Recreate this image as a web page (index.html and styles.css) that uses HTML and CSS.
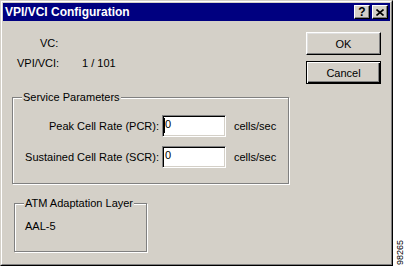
FILE: index.html
```html
<!DOCTYPE html>
<html lang="en">

<head>
    <meta charset="UTF-8">
    <title>VPI/VCI Configuration</title>
    <link rel="stylesheet" href="styles.css">
</head>

<body>
    <div class="dialog">
        <div class="frame">
            <div class="titlebar">
                <span class="title">VPI/VCI Configuration</span>
                <div class="caption-btns">
                    <span class="cbtn">?</span>
                    <span class="cbtn">
                        <svg width="8" height="7" viewBox="0 0 8 7">
                            <path d="M0.5 0.5 L7.5 6.5 M7.5 0.5 L0.5 6.5" stroke="#000" stroke-width="1.6" fill="none" />
                        </svg>
                    </span>
                </div>
            </div>
            <div class="content">
                <div class="main">
                    <div class="info-row vc"><span class="lbl">VC:</span></div>
                    <div class="info-row vpi"><span class="lbl">VPI/VCI:</span><span class="val">1 / 101</span></div>

                    <div class="group service">
                        <span class="group-label">Service Parameters</span>
                        <div class="field">
                            <span class="field-label">Peak Cell Rate (PCR):</span>
                            <span class="edit"><span class="caret"></span>0</span>
                            <span class="unit">cells/sec</span>
                        </div>
                        <div class="field">
                            <span class="field-label">Sustained Cell Rate (SCR):</span>
                            <span class="edit">0</span>
                            <span class="unit">cells/sec</span>
                        </div>
                    </div>

                    <div class="group aal">
                        <span class="group-label">ATM Adaptation Layer</span>
                        AAL-5
                    </div>
                </div>
                <div class="buttons">
                    <button class="btn">OK</button>
                    <button class="btn default">Cancel</button>
                </div>
            </div>
        </div>
    </div>
    <div class="side"><span class="figno">98265</span></div>
</body>

</html>
```

FILE: styles.css
```css
* {
    margin: 0;
    padding: 0;
    box-sizing: border-box;
}

body {
    display: flex;
    width: 406px;
    height: 267px;
    background: #fff;
    font-family: "Liberation Sans", Arial, sans-serif;
    font-size: 11px;
    color: #000;
}

.dialog {
    width: 393px;
    height: 266px;
    background: #d4d0c8;
    border: 1px solid;
    border-color: #d4d0c8 #000 #000 #d4d0c8;
}

.frame {
    height: 100%;
    border: 1px solid;
    border-color: #fff #808080 #808080 #fff;
    padding: 1px;
    display: flex;
    flex-direction: column;
}

/* title bar */
.titlebar {
    height: 18px;
    background: #000080;
    color: #fff;
    display: flex;
    align-items: center;
    padding: 0 2px;
}

.title {
    flex: 1;
    font-weight: bold;
    font-size: 12px;
}

.caption-btns {
    display: flex;
    gap: 2px;
}

.cbtn {
    width: 16px;
    height: 14px;
    background: #d4d0c8;
    border: 1px solid;
    border-color: #fff #000 #000 #fff;
    box-shadow: inset -1px -1px 0 #808080;
    display: flex;
    align-items: center;
    justify-content: center;
    color: #000;
    font-weight: bold;
    font-size: 12px;
}

/* body */
.content {
    flex: 1;
    display: flex;
}

.main {
    flex: 1;
}

.info-row {
    display: flex;
    line-height: 13px;
}

.vc {
    margin: 16px 0 0 37px;
}

.vpi {
    margin: 7px 0 0 14px;
}

.vpi .lbl {
    width: 65px;
}

/* group boxes */
.group {
    position: relative;
    border: 1px solid #808080;
    box-shadow: 1px 1px 0 #fff, inset 1px 1px 0 #fff;
}

.group-label {
    position: absolute;
    top: -7px;
    left: 9px;
    padding: 0 1px;
    background: #d4d0c8;
    line-height: 13px;
}

.service {
    margin: 27px 0 0 9px;
    width: 277px;
    height: 87px;
    padding-top: 17px;
    display: flex;
    flex-direction: column;
    gap: 9px;
}

.field {
    display: flex;
    align-items: center;
    height: 22px;
}

.field-label {
    width: 146px;
    text-align: right;
}

.edit {
    position: relative;
    margin-left: 3px;
    width: 64px;
    height: 22px;
    padding: 2px 0 0 2px;
    background: #fff;
    border: 1px solid;
    border-color: #808080 #fff #fff #808080;
    box-shadow: inset 1px 1px 0 #000, inset -1px -1px 0 #d4d0c8;
    line-height: 13px;
}

.caret {
    position: absolute;
    left: 1px;
    top: 2px;
    width: 1px;
    height: 15px;
    background: #000;
}

.unit {
    margin-left: 8px;
}

.aal {
    margin: 19px 0 0 11px;
    width: 133px;
    height: 49px;
    padding: 16px 0 0 10px;
    line-height: 13px;
}

/* buttons */
.buttons {
    width: 75px;
    margin: 11px 9px 0 0;
    display: flex;
    flex-direction: column;
    gap: 6px;
}

.btn {
    width: 75px;
    height: 23px;
    background: #d4d0c8;
    font: inherit;
    color: #000;
    border: 1px solid;
    border-color: #fff #000 #000 #fff;
    box-shadow: inset -1px -1px 0 #808080, inset 1px 1px 0 #dfdfdf;
}

.btn.default {
    border: 1px solid #000;
    box-shadow: inset 1px 1px 0 #fff, inset -1px -1px 0 #000, inset -2px -2px 0 #808080;
}

/* figure number */
.side {
    flex: 1;
    display: flex;
    align-items: flex-end;
    justify-content: center;
    padding: 0 0 2px 2px;
}

.figno {
    writing-mode: vertical-rl;
    transform: rotate(180deg);
    font-size: 9px;
    line-height: 9px;
}
```
